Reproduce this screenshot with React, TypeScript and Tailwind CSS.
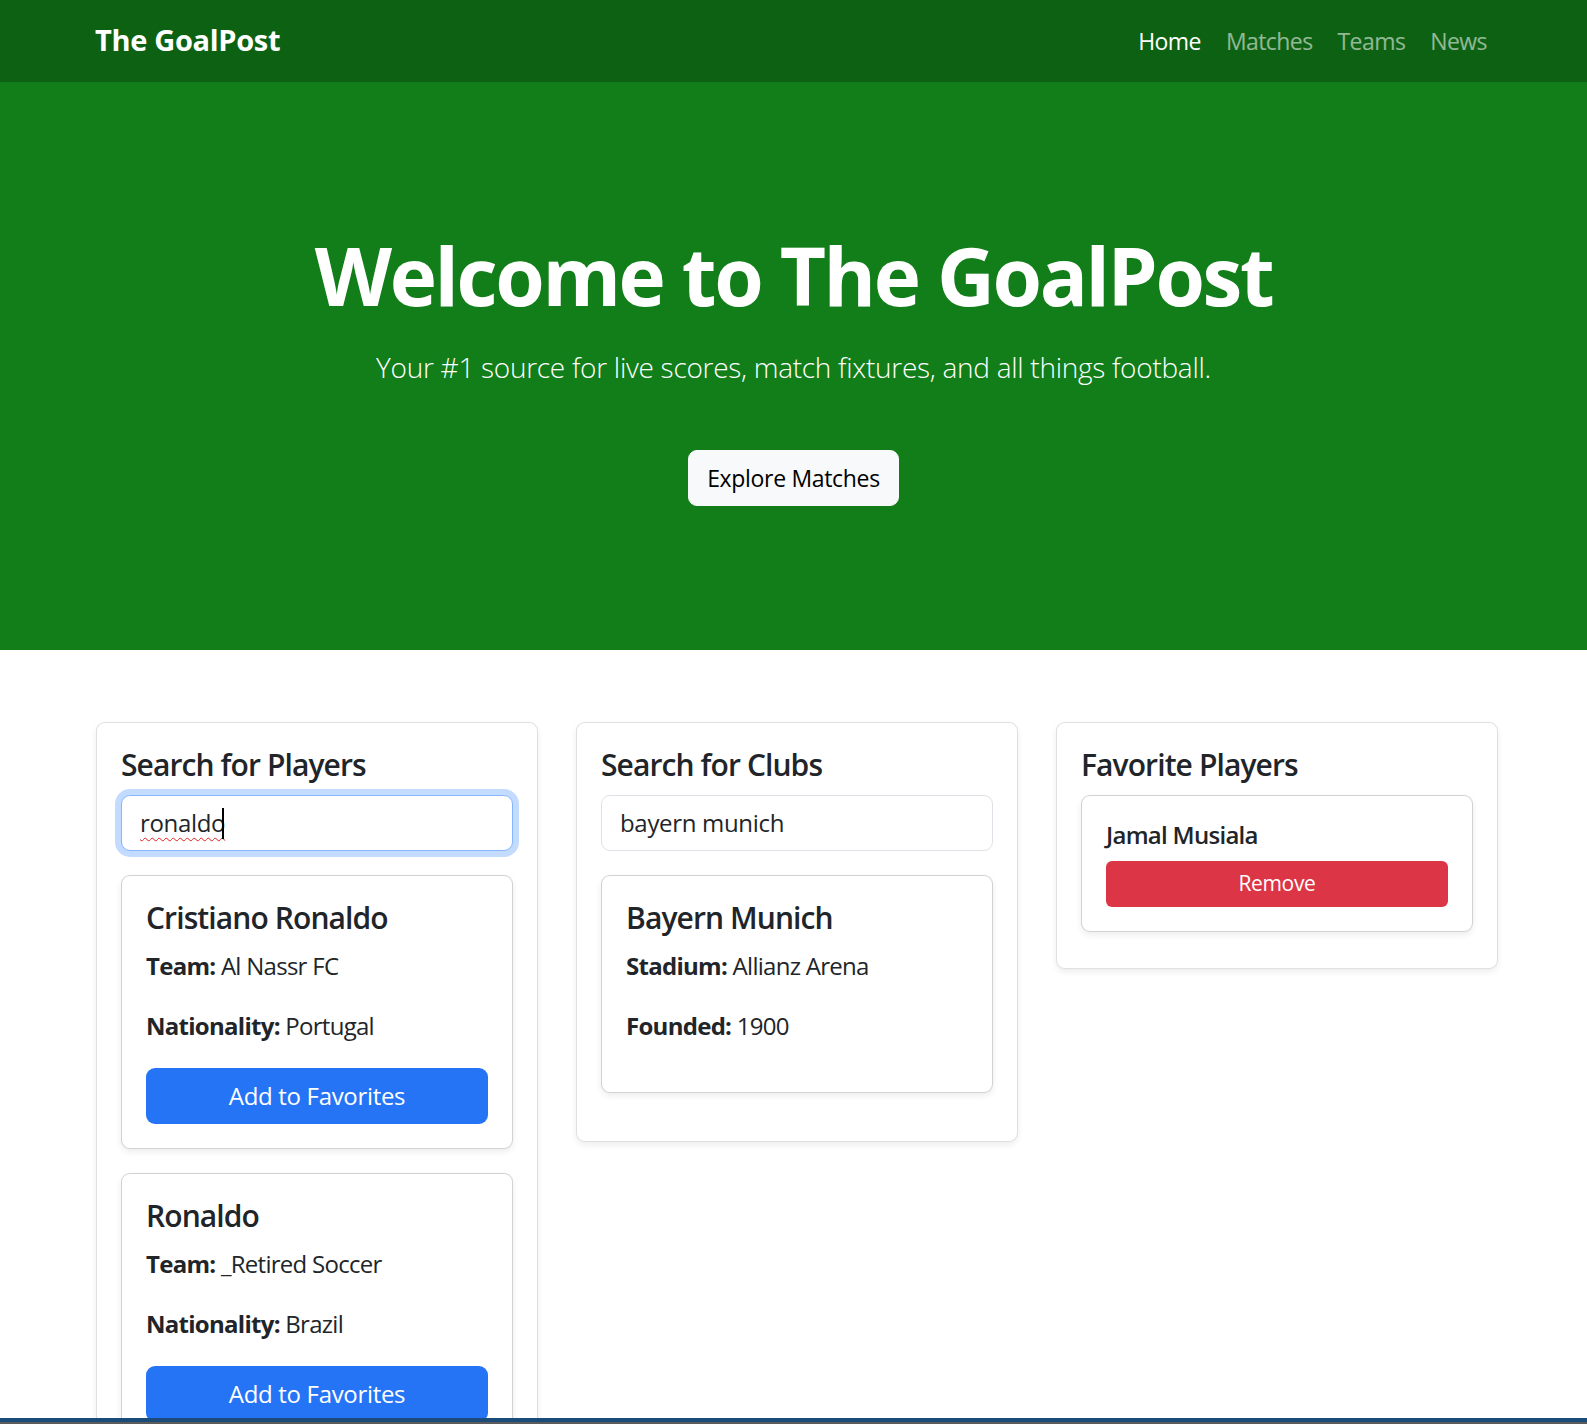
import React from 'react';

interface Player {
  name: string;
  team: string;
  nationality: string;
}

const players: Player[] = [
  { name: 'Cristiano Ronaldo', team: 'Al Nassr FC', nationality: 'Portugal' },
  { name: 'Ronaldo', team: '_Retired Soccer', nationality: 'Brazil' },
];

const font = "font-['Open_Sans',sans-serif] tracking-[-0.02em]";

function Panel({ title, children }: { title: string; children: React.ReactNode }) {
  return (
    <div className="w-[442px] shrink-0 rounded-[9px] border border-black/[0.12] bg-white p-6 shadow-[0_3px_6px_rgba(0,0,0,0.075)]">
      <h5 className="mb-3 text-[30px] font-[550] leading-[36px] tracking-[-0.03em]">{title}</h5>
      {children}
    </div>
  );
}

function InfoCard({ children }: { children: React.ReactNode }) {
  return (
    <div className="mb-6 rounded-[9px] border border-black/[0.175] bg-white p-6 shadow-[0_3px_6px_rgba(0,0,0,0.075)]">
      {children}
    </div>
  );
}

function Field({ label, value }: { label: string; value: string }) {
  return (
    <p className="mb-6 text-[24px] leading-[36px] tracking-[-0.03em]">
      <strong className="font-bold">{label}:</strong> {value}
    </p>
  );
}

export default function App() {
  return (
    <div className={`min-h-screen bg-white text-[#212529] ${font}`}>
      {/* Navbar */}
      <nav className="flex h-[82px] items-center justify-between bg-[#0c6112] pl-[95px] pr-[100px]">
        <span className="-mt-[2px] text-[29px] font-bold leading-[36px] text-white">The GoalPost</span>
        <ul className="flex gap-[25px] text-[23px] leading-[36px] tracking-[-0.025em]">
          <li className="text-white">Home</li>
          <li className="text-white/55">Matches</li>
          <li className="text-white/55">Teams</li>
          <li className="text-white/55">News</li>
        </ul>
      </nav>

      {/* Hero */}
      <section className="flex h-[568px] flex-col items-center bg-[#117e19] pt-[145px] text-white">
        <h1 className="text-[80px] font-bold leading-[96px] tracking-[-0.03em]">Welcome to The GoalPost</h1>
        <p className="mt-[23px] text-[28px] font-light leading-[42px] tracking-[-0.01em]">
          Your #1 source for live scores, match fixtures, and all things football.
        </p>
        <button className="mt-[62px] h-[56px] rounded-[9px] border border-[#f8f9fa] bg-[#f8f9fa] px-[18px] text-[23px] text-[#000]">
          Explore Matches
        </button>
      </section>

      {/* Content */}
      <main className="flex items-start gap-[38px] pl-[96px] pt-[72px]">
        <Panel title="Search for Players">
          <div className="mb-6 flex h-[56px] items-center rounded-[9px] border border-[#86b7fe] bg-white px-[18px] text-[24px] shadow-[0_0_0_6px_rgba(13,110,253,0.25)]">
            <span className="underline decoration-[#e02020] decoration-wavy decoration-1 underline-offset-[5px]">ronaldo</span>
            <span className="-ml-[3px] h-[31px] w-[2px] bg-black" />
          </div>
          {players.map((p) => (
            <InfoCard key={p.name}>
              <h5 className="mb-3 text-[30px] font-[550] leading-[36px] tracking-[-0.03em]">{p.name}</h5>
              <Field label="Team" value={p.team} />
              <Field label="Nationality" value={p.nationality} />
              <button className="h-[56px] w-full rounded-[9px] bg-[#2574f6] text-[24px] text-white">Add to Favorites</button>
            </InfoCard>
          ))}
        </Panel>

        <Panel title="Search for Clubs">
          <div className="mb-6 flex h-[56px] items-center rounded-[9px] border border-[#dee2e6] bg-white px-[18px] text-[24px]">
            bayern munich
          </div>
          <InfoCard>
            <h5 className="mb-3 text-[30px] font-[550] leading-[36px] tracking-[-0.03em]">Bayern Munich</h5>
            <Field label="Stadium" value="Allianz Arena" />
            <Field label="Founded" value="1900" />
          </InfoCard>
        </Panel>

        <Panel title="Favorite Players">
          <div className="mb-3 rounded-[9px] border border-black/[0.175] bg-white p-6 shadow-[0_3px_6px_rgba(0,0,0,0.075)]">
            <h6 className="mb-3 text-[24px] font-[550] leading-[29px] tracking-[-0.03em]">Jamal Musiala</h6>
            <button className="h-[46px] w-full rounded-[6px] bg-[#dc3545] text-[21px] text-white">Remove</button>
          </div>
        </Panel>
      </main>

      {/* window edge */}
      <div className="fixed bottom-0 left-0 right-0 h-[6px] border-b-2 border-[#5b5b5b] bg-[#1b4b78]" />
    </div>
  );
}
